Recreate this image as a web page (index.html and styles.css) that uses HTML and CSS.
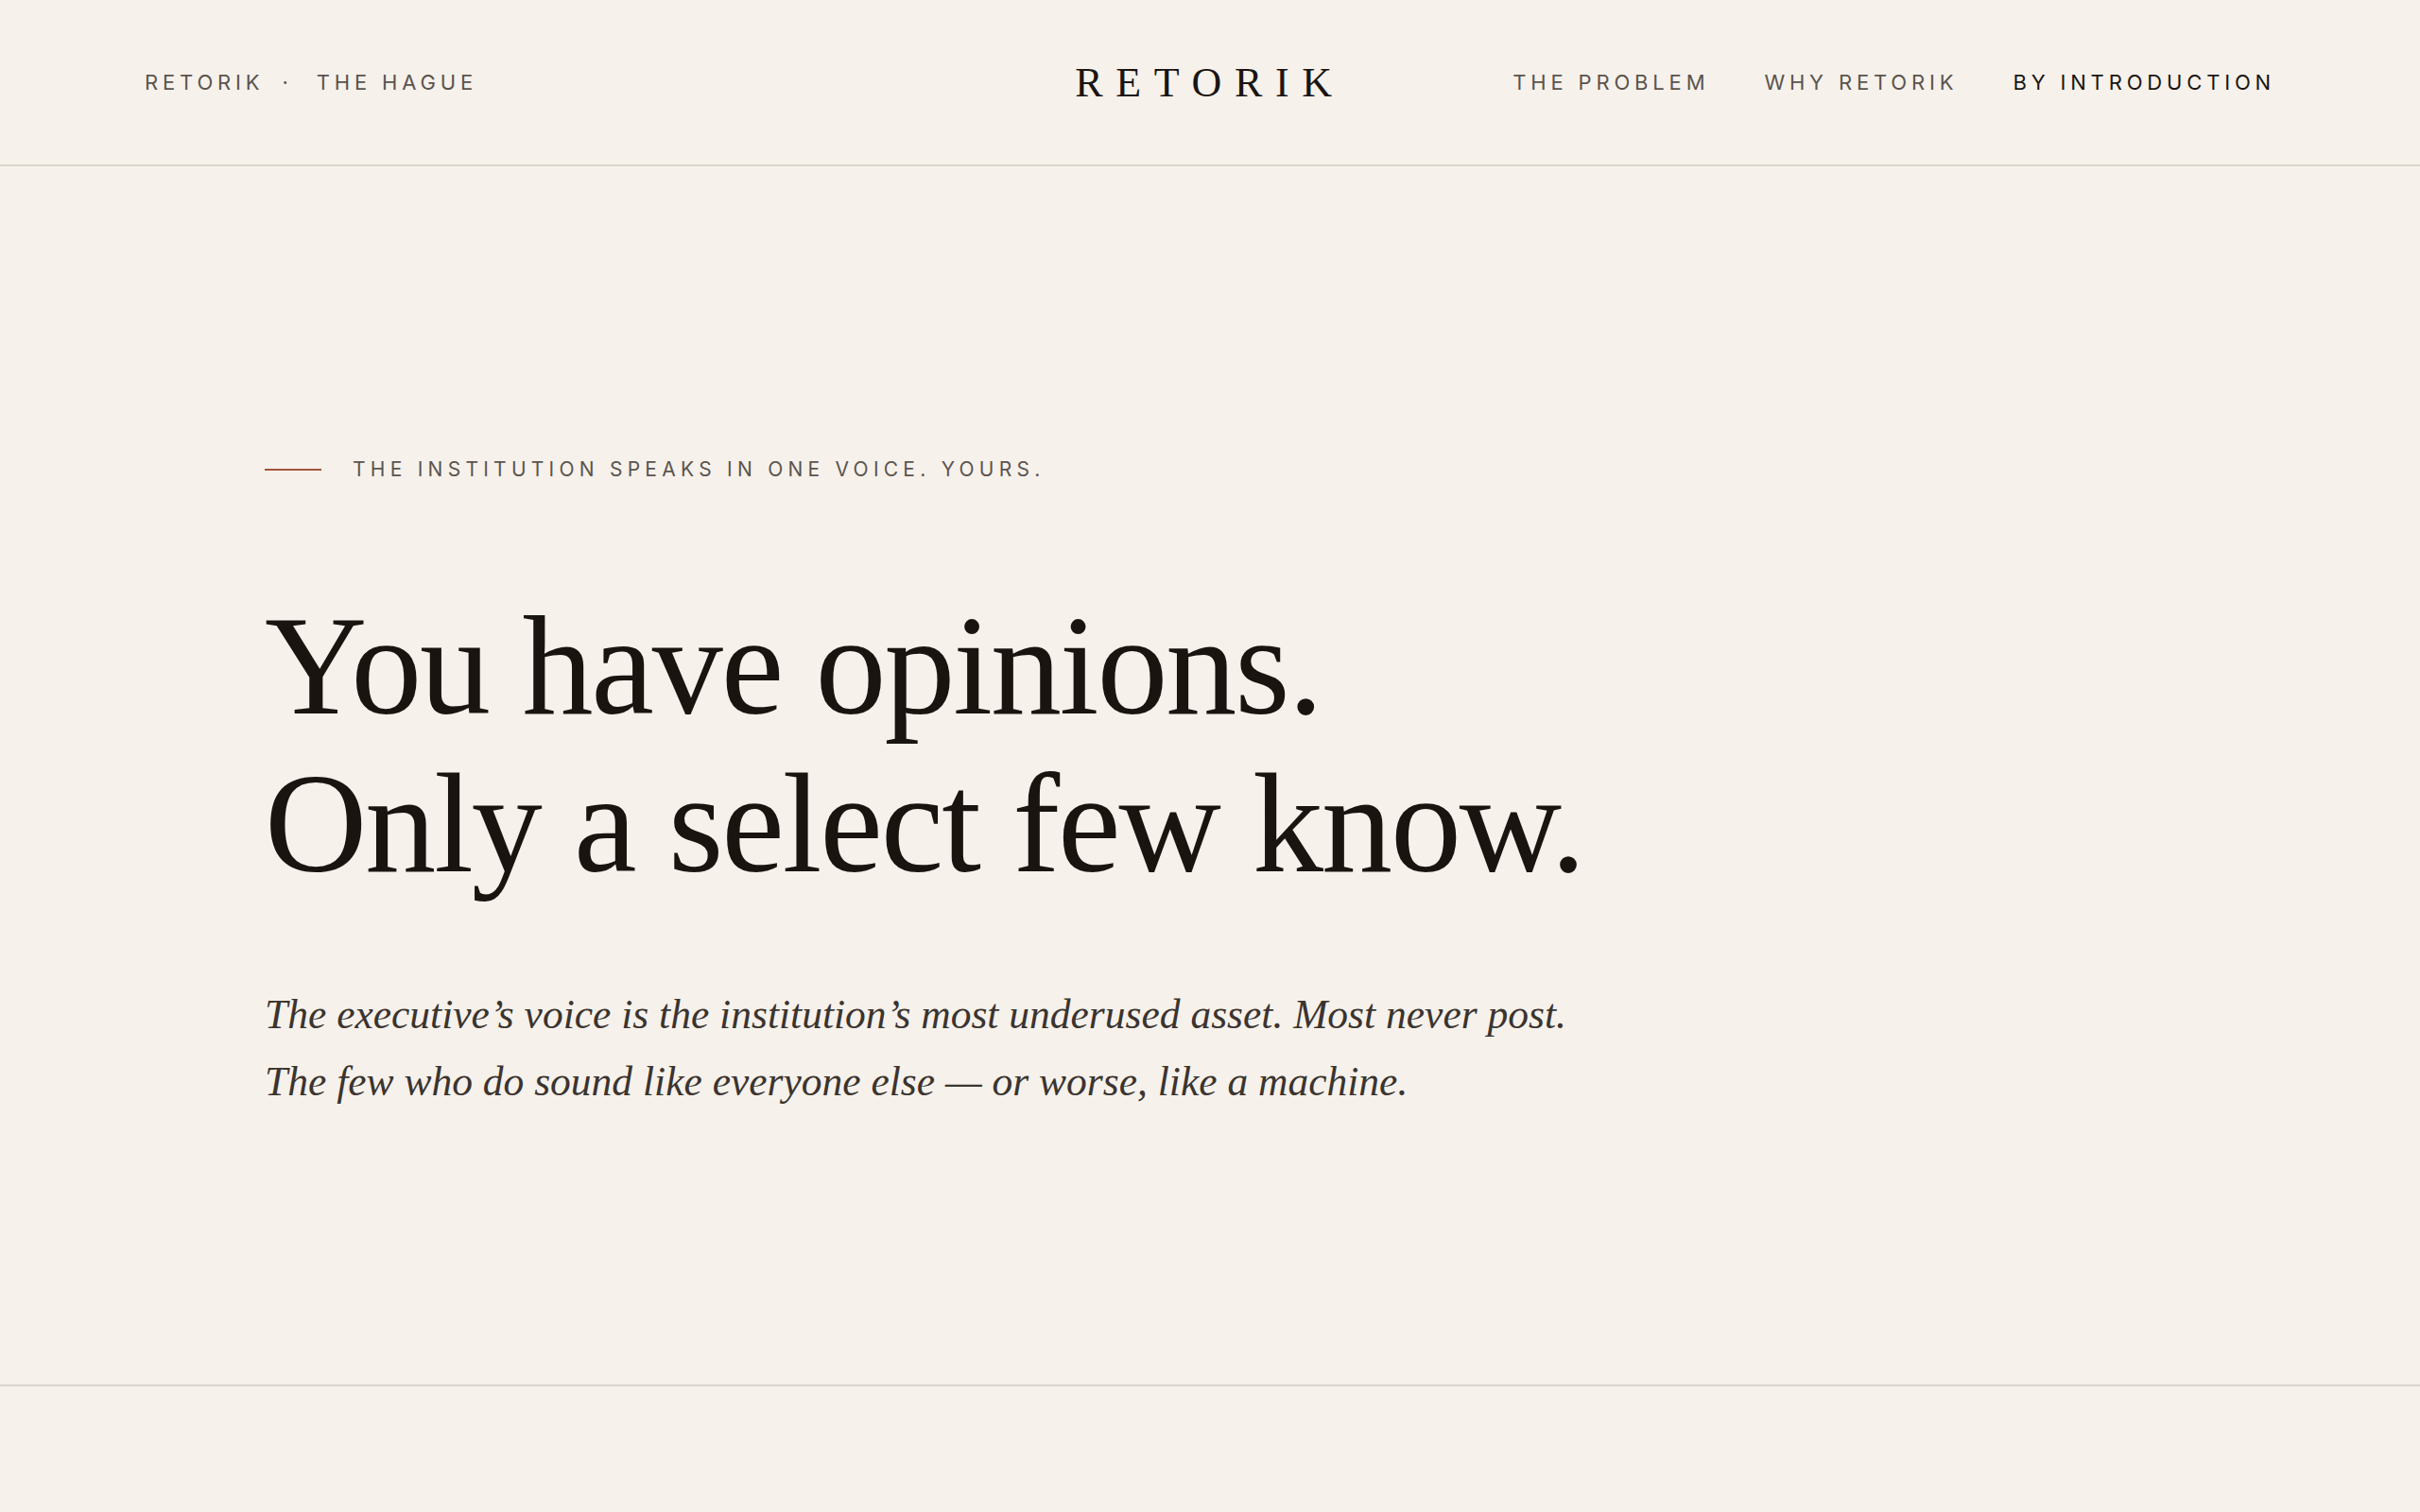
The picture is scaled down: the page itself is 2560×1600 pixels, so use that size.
FILE: index.html
```html
<!DOCTYPE html>
<html lang="en">

<head>
    <meta charset="UTF-8">
    <meta name="viewport" content="width=device-width, initial-scale=1.0">
    <title>Retorik</title>
    <link rel="stylesheet" href="styles.css">
</head>

<body>
    <!-- Top bar: place, wordmark, navigation -->
    <header class="topbar">
        <div class="topbar-place">Retorik <span class="dot">&middot;</span> The Hague</div>
        <a class="wordmark" href="#">Retorik</a>
        <nav class="topbar-nav">
            <a href="#problem">The Problem</a>
            <a href="#why">Why Retorik</a>
            <a href="#introduction" class="active">By Introduction</a>
        </nav>
    </header>

    <!-- Hero -->
    <section class="hero">
        <p class="eyebrow"><span class="rule"></span>The institution speaks in one voice. Yours.</p>
        <h1 class="headline">You have opinions.<br>Only a select few know.</h1>
        <p class="lede">The executive&rsquo;s voice is the institution&rsquo;s most underused asset. Most never post.<br>The few who do sound like everyone else &mdash; or worse, like a machine.</p>
    </section>

    <section class="next" id="problem"></section>
</body>

</html>
```

FILE: styles.css
```css
body {
    margin: 0;
    padding: 0;
    background-color: #f6f1eb;
    color: #1a1512;
    font-family: Inter, "Noto Sans", sans-serif;
}

a {
    color: inherit;
    text-decoration: none;
}

.topbar {
    display: grid;
    grid-template-columns: 1fr auto 1fr;
    align-items: center;
    height: 174px;
    padding: 0 153px;
    border-bottom: 2px solid #dcd5cd;
}

.topbar-place,
.topbar-nav a {
    font-size: 22px;
    letter-spacing: 0.22em;
    text-transform: uppercase;
    color: #5b534d;
}

.topbar-place .dot {
    margin: 0 14px 0 8px;
}

.wordmark {
    font-family: "Liberation Serif", serif;
    font-size: 44px;
    letter-spacing: 0.31em;
    text-transform: uppercase;
    color: #1a1512;
}

.topbar-nav {
    display: flex;
    justify-content: flex-end;
    gap: 58px;
}

.topbar-nav a.active {
    color: #1a1512;
}

.hero {
    padding: 306px 280px 285px;
    border-bottom: 2px solid #dcd5cd;
}

.eyebrow {
    display: flex;
    align-items: center;
    margin: 0 0 109px;
    font-size: 21px;
    line-height: 30px;
    letter-spacing: 0.25em;
    text-transform: uppercase;
    color: #5b544f;
}

.eyebrow .rule {
    width: 60px;
    height: 2px;
    margin-right: 33px;
    background: #a2543b;
}

.headline {
    margin: 0 0 83px;
    font-family: "Liberation Serif", serif;
    font-weight: 400;
    font-size: 150px;
    line-height: 167px;
    letter-spacing: -0.014em;
    color: #1a1411;
}

.lede {
    margin: 0;
    font-family: "Liberation Serif", serif;
    font-style: italic;
    font-size: 43.5px;
    line-height: 71px;
    color: #3b342f;
}

.next {
    height: 200px;
}
```
